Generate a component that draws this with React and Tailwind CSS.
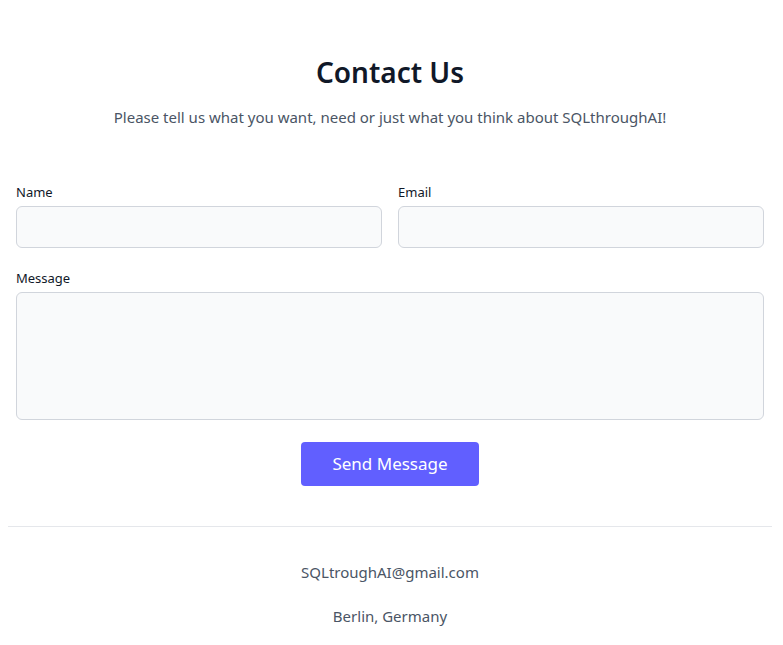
import React from 'react';

function App() {
  return (
    <div className="min-h-screen bg-white font-['Noto_Sans',sans-serif]">
      <div className="w-[764px] ml-2">
        <div className="px-2 pt-[54px]">
          <h2 className="text-[28px] leading-9 font-semibold text-center text-gray-900">Contact Us</h2>
          <p className="mt-[15px] text-center text-[15px] leading-6 text-gray-600">
            Please tell us what you want, need or just what you think about SQLthroughAI!
          </p>
          <form className="mt-[53px]" onSubmit={(e) => e.preventDefault()}>
            <div className="grid grid-cols-2 gap-4">
              <div>
                <label className="block text-[13px] leading-5 text-gray-900 mb-1">Name</label>
                <input type="text" className="block w-full h-[42px] bg-gray-50 border border-gray-300 rounded-md px-3 focus:outline-none" />
              </div>
              <div>
                <label className="block text-[13px] leading-5 text-gray-900 mb-1">Email</label>
                <input type="email" className="block w-full h-[42px] bg-gray-50 border border-gray-300 rounded-md px-3 focus:outline-none" />
              </div>
            </div>
            <div className="mt-5">
              <label className="block text-[13px] leading-5 text-gray-900 mb-1">Message</label>
              <textarea className="block w-full h-[128px] bg-gray-50 border border-gray-300 rounded-md px-3 py-2 resize-none focus:outline-none"></textarea>
            </div>
            <div className="flex justify-center mt-[22px]">
              <button type="submit" className="w-[178px] h-[44px] bg-indigo-500 text-white text-[17px] rounded">
                Send Message
              </button>
            </div>
          </form>
        </div>
        <div className="mt-10 border-t border-gray-200 pt-[33px] text-center text-gray-600 text-[15px] leading-6">
          <p>SQLtroughAI@gmail.com</p>
          <p className="mt-5">Berlin, Germany</p>
        </div>
      </div>
    </div>
  );
}

export default App;
